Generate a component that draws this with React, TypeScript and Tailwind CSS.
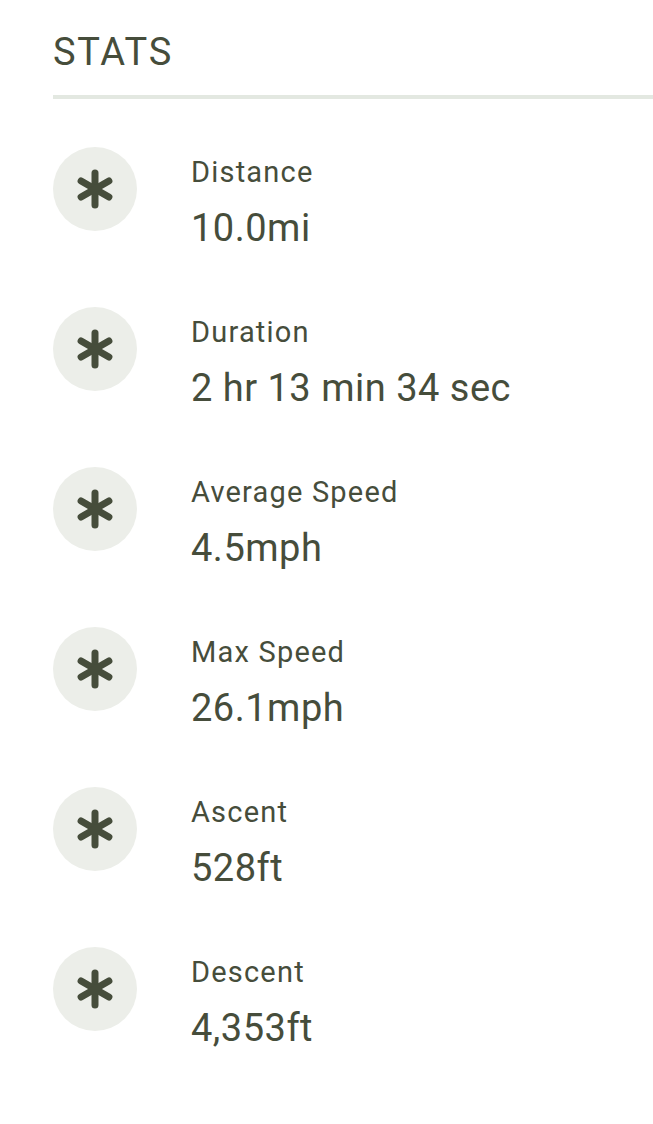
const stats = [
  { label: "Distance", value: "10.0mi" },
  { label: "Duration", value: "2 hr 13 min 34 sec" },
  { label: "Average Speed", value: "4.5mph" },
  { label: "Max Speed", value: "26.1mph" },
  { label: "Ascent", value: "528ft" },
  { label: "Descent", value: "4,353ft" },
];

function Asterisk() {
  return (
    <svg width="40" height="40" viewBox="-20 -20 40 40" className="text-[#464d3b]">
      <g stroke="currentColor" strokeWidth="7" strokeLinecap="round">
        <line x1="0" y1="-16" x2="0" y2="16" />
        <line x1="-13.9" y1="-8" x2="13.9" y2="8" />
        <line x1="-13.9" y1="8" x2="13.9" y2="-8" />
      </g>
    </svg>
  );
}

export default function App() {
  return (
    <div className="min-h-[1124px] bg-white pl-[53px] pt-[30px] font-['Roboto',sans-serif] text-[#464d3b]">
      <h2 className="text-[38px] leading-[44px] tracking-[1.8px]">STATS</h2>
      <div className="mt-[21px] h-[4px] bg-[#e3e8e1]" />

      <div className="mt-[48px]">
        {stats.map((s) => (
          <div key={s.label} className="flex h-[160px] items-start gap-[54px]">
            <div className="flex h-[84px] w-[84px] shrink-0 items-center justify-center rounded-full bg-[#eceee9]">
              <Asterisk />
            </div>
            <div className="mt-[8px]">
              <div className="text-[29px] leading-[34px] tracking-[1.2px]">{s.label}</div>
              <div className="mt-[17px] text-[38px] leading-[44px] tracking-[0.5px]">{s.value}</div>
            </div>
          </div>
        ))}
      </div>
    </div>
  );
}
